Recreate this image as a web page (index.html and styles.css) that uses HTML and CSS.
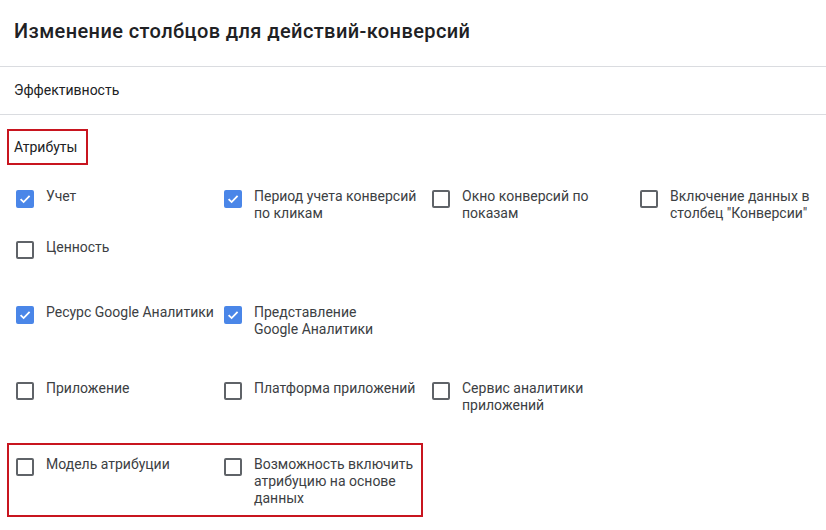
FILE: index.html
```html
<!DOCTYPE html>
<html lang="ru">
<head>
<meta charset="utf-8">
<title>Изменение столбцов</title>
<link rel="stylesheet" href="styles.css">
</head>
<body>
<div class="panel">
  <div class="header"><h1 class="title">Изменение столбцов для действий-конверсий</h1></div>
  <div class="section">Эффективность</div>
  <div class="attrs">
    <div class="attrs-label">Атрибуты</div>
  </div>
  <div class="group g1">
    <label class="item"><span class="cb checked"></span><span class="txt">Учет</span></label>
    <label class="item"><span class="cb checked"></span><span class="txt">Период учета конверсий по кликам</span></label>
    <label class="item"><span class="cb"></span><span class="txt">Окно конверсий по показам</span></label>
    <label class="item"><span class="cb"></span><span class="txt">Включение данных в столбец "Конверсии"</span></label>
    <label class="item"><span class="cb"></span><span class="txt">Ценность</span></label>
  </div>
  <div class="group g2">
    <label class="item"><span class="cb checked"></span><span class="txt">Ресурс Google&nbsp;Аналитики</span></label>
    <label class="item"><span class="cb checked"></span><span class="txt">Представление Google&nbsp;Аналитики</span></label>
  </div>
  <div class="group g3">
    <label class="item"><span class="cb"></span><span class="txt">Приложение</span></label>
    <label class="item"><span class="cb"></span><span class="txt">Платформа приложений</span></label>
    <label class="item"><span class="cb"></span><span class="txt">Сервис аналитики приложений</span></label>
  </div>
  <div class="group g4">
    <label class="item"><span class="cb"></span><span class="txt">Модель атрибуции</span></label>
    <label class="item"><span class="cb"></span><span class="txt">Возможность включить атрибуцию на основе данных</span></label>
  </div>
</div>
</body>
</html>
```
FILE: styles.css
```css
html, body {
  margin: 0;
  padding: 0;
  background: #ffffff;
}
body {
  font-family: Roboto, "Noto Sans", Arial, sans-serif;
  color: #3c4043;
  font-size: 14px;
}
.panel {
  width: 826px;
}
.header {
  height: 67px;
  box-sizing: border-box;
  padding: 20px 14px 0;
  border-bottom: 1px solid #dadce0;
}
.title {
  margin: 0;
  font-size: 20px;
  line-height: 22px;
  font-weight: 500;
  color: #202124;
  letter-spacing: 0.4px;
}
.section {
  height: 48px;
  box-sizing: border-box;
  padding: 0 14px;
  line-height: 47px;
  border-bottom: 1px solid #dadce0;
  color: #202124;
}
.attrs {
  padding: 14px 0 0 7px;
}
.attrs-label {
  display: inline-block;
  vertical-align: top;
  box-sizing: border-box;
  width: 81px;
  height: 36px;
  padding: 0 5px;
  line-height: 32px;
  border: 2px solid #c8151f;
  color: #202124;
}
.group {
  display: grid;
  grid-template-columns: 208px 208px 208px 1fr;
  row-gap: 17px;
  padding-left: 16px;
}
.g1 { margin-top: 23px; }
.g2 { margin-top: 45px; }
.g3 { margin-top: 42px; }
.g4 {
  margin: 29px 0 0 7px;
  width: 416px;
  box-sizing: border-box;
  padding: 11px 0 8px 7px;
  border: 2px solid #c8151f;
  grid-template-columns: 208px 208px;
}
.item {
  display: flex;
  align-items: flex-start;
  line-height: 17px;
  min-width: 0;
}
.cb {
  flex: 0 0 18px;
  width: 18px;
  height: 18px;
  box-sizing: border-box;
  margin-top: 2px;
  margin-right: 12px;
  border: 2px solid #5f6368;
  border-radius: 2px;
}
.cb.checked {
  border-color: #4a86e8;
  background: #4a86e8 url("data:image/svg+xml;utf8,<svg xmlns='http://www.w3.org/2000/svg' viewBox='0 0 14 14'><path d='M2.6 7.2 L5.6 10.1 L11.6 3.9' fill='none' stroke='white' stroke-width='1.8'/></svg>") center / 14px 14px no-repeat;
}
.txt {
  flex: 0 1 178px;
  max-width: 178px;
}
```
